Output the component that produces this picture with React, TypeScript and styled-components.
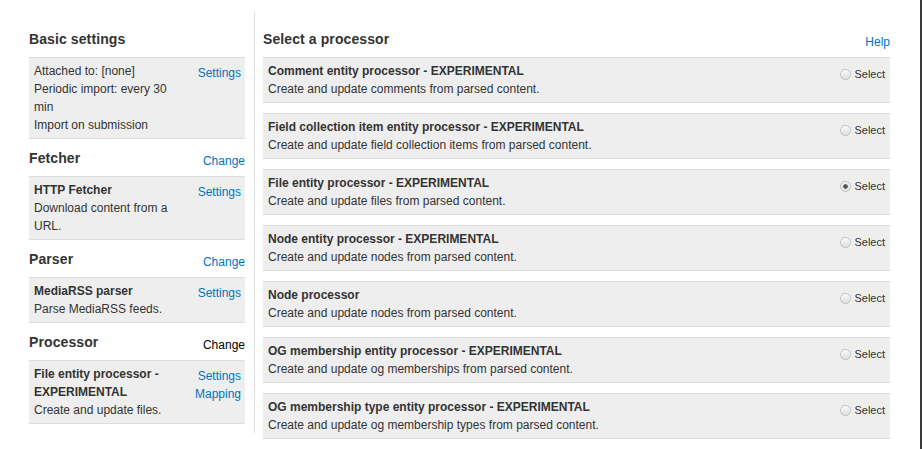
import * as React from 'react';
import styled, { createGlobalStyle } from 'styled-components';

const GlobalStyle = createGlobalStyle`
  body {
    margin: 0;
    background: #fff;
    color: #333;
    font-family: "Liberation Sans", Arial, Helvetica, sans-serif;
  }
`;

const Page = styled.div`
  display: flex;
  align-items: flex-start;
  width: 922px;
  height: 449px;
  overflow: hidden;
`;

const Sidebar = styled.aside`
  width: 216px;
  margin-left: 29px;
  padding-top: 20px;
`;

const Divider = styled.div`
  width: 1px;
  height: 421px;
  margin: 12px 8px 0 9px;
  background: #e0e0e0;
`;

const Main = styled.main`
  width: 627px;
  padding-top: 20px;
`;

const WindowEdge = styled.div`
  align-self: stretch;
  width: 2px;
  margin-left: auto;
  background: #3a3a3a;
`;

const HeaderRow = styled.div`
  display: flex;
  justify-content: space-between;
  align-items: flex-start;
  box-sizing: border-box;
  height: 37px;
  padding-top: 10px;
`;

const Heading = styled.h2`
  margin: 0;
  font-size: 14px;
  line-height: 18px;
  font-weight: bold;
  letter-spacing: 0.1px;
  color: #333;
`;

const Link = styled.a<{ $active?: boolean }>`
  font-size: 12px;
  line-height: 18px;
  color: ${p => (p.$active ? '#000' : '#0074bd')};
  text-decoration: none;
  cursor: pointer;
`;

const HeaderLink = styled(Link)`
  margin-top: 3px;
`;

const Box = styled.div`
  display: flex;
  justify-content: space-between;
  padding: 4px 4px 4px 5px;
  background: #eee;
  border-top: 1px solid #ddd;
  border-bottom: 1px solid #ddd;
  font-size: 12px;
  line-height: 18px;
`;

const BoxText = styled.div`
  width: 145px;
`;

const Title = styled.div`
  font-weight: bold;
`;

const Actions = styled.div`
  display: flex;
  flex-direction: column;
  align-items: flex-end;
  padding-top: 2px;
`;

const Item = styled.div`
  display: flex;
  justify-content: space-between;
  margin-bottom: 10px;
  padding: 4px 5px;
  background: #eee;
  border-top: 1px solid #ddd;
  border-bottom: 1px solid #ddd;
  font-size: 12px;
  line-height: 18px;
`;

const Option = styled.label`
  display: flex;
  align-items: center;
  gap: 3px;
  height: 18px;
  margin-top: 3px;
  font-size: 11px;
  color: #333;
`;

const Radio = styled.input`
  appearance: none;
  box-sizing: border-box;
  width: 11px;
  height: 11px;
  margin: 0;
  border: 1px solid #bbb;
  border-radius: 50%;
  background: linear-gradient(#f7f7f7, #e0e0e0);
  box-shadow: inset 0 1px 1px #fff;

  &:checked {
    background: radial-gradient(circle, #555 0 2px, #e8e8e8 2.5px);
  }
`;

const sections = [
  {
    name: 'Basic settings',
    lines: ['Attached to: [none]', 'Periodic import: every 30 min', 'Import on submission'],
    links: ['Settings']
  },
  {
    name: 'Fetcher',
    change: true,
    title: 'HTTP Fetcher',
    lines: ['Download content from a URL.'],
    links: ['Settings']
  },
  {
    name: 'Parser',
    change: true,
    title: 'MediaRSS parser',
    lines: ['Parse MediaRSS feeds.'],
    links: ['Settings']
  },
  {
    name: 'Processor',
    change: true,
    active: true,
    title: 'File entity processor - EXPERIMENTAL',
    lines: ['Create and update files.'],
    links: ['Settings', 'Mapping']
  }
];

const processors = [
  ['Comment entity processor - EXPERIMENTAL', 'Create and update comments from parsed content.'],
  ['Field collection item entity processor - EXPERIMENTAL', 'Create and update field collection items from parsed content.'],
  ['File entity processor - EXPERIMENTAL', 'Create and update files from parsed content.'],
  ['Node entity processor - EXPERIMENTAL', 'Create and update nodes from parsed content.'],
  ['Node processor', 'Create and update nodes from parsed content.'],
  ['OG membership entity processor - EXPERIMENTAL', 'Create and update og memberships from parsed content.'],
  ['OG membership type entity processor - EXPERIMENTAL', 'Create and update og membership types from parsed content.']
];

const App: React.FC = () => (
  <>
    <GlobalStyle />
    <Page>
      <Sidebar>
        {sections.map(section => (
          <section key={section.name}>
            <HeaderRow>
              <Heading>{section.name}</Heading>
              {section.change && <HeaderLink $active={section.active}>Change</HeaderLink>}
            </HeaderRow>
            <Box>
              <BoxText>
                {section.title && <Title>{section.title}</Title>}
                {section.lines.map(line => (
                  <div key={line}>{line}</div>
                ))}
              </BoxText>
              <Actions>
                {section.links.map(link => (
                  <Link key={link}>{link}</Link>
                ))}
              </Actions>
            </Box>
          </section>
        ))}
      </Sidebar>
      <Divider />
      <Main>
        <HeaderRow>
          <Heading>Select a processor</Heading>
          <HeaderLink>Help</HeaderLink>
        </HeaderRow>
        {processors.map(([title, description], index) => (
          <Item key={title}>
            <div>
              <Title>{title}</Title>
              <div>{description}</div>
            </div>
            <Option>
              <Radio type="radio" name="processor" defaultChecked={index === 2} />
              Select
            </Option>
          </Item>
        ))}
      </Main>
      <WindowEdge />
    </Page>
  </>
);

export default App;
